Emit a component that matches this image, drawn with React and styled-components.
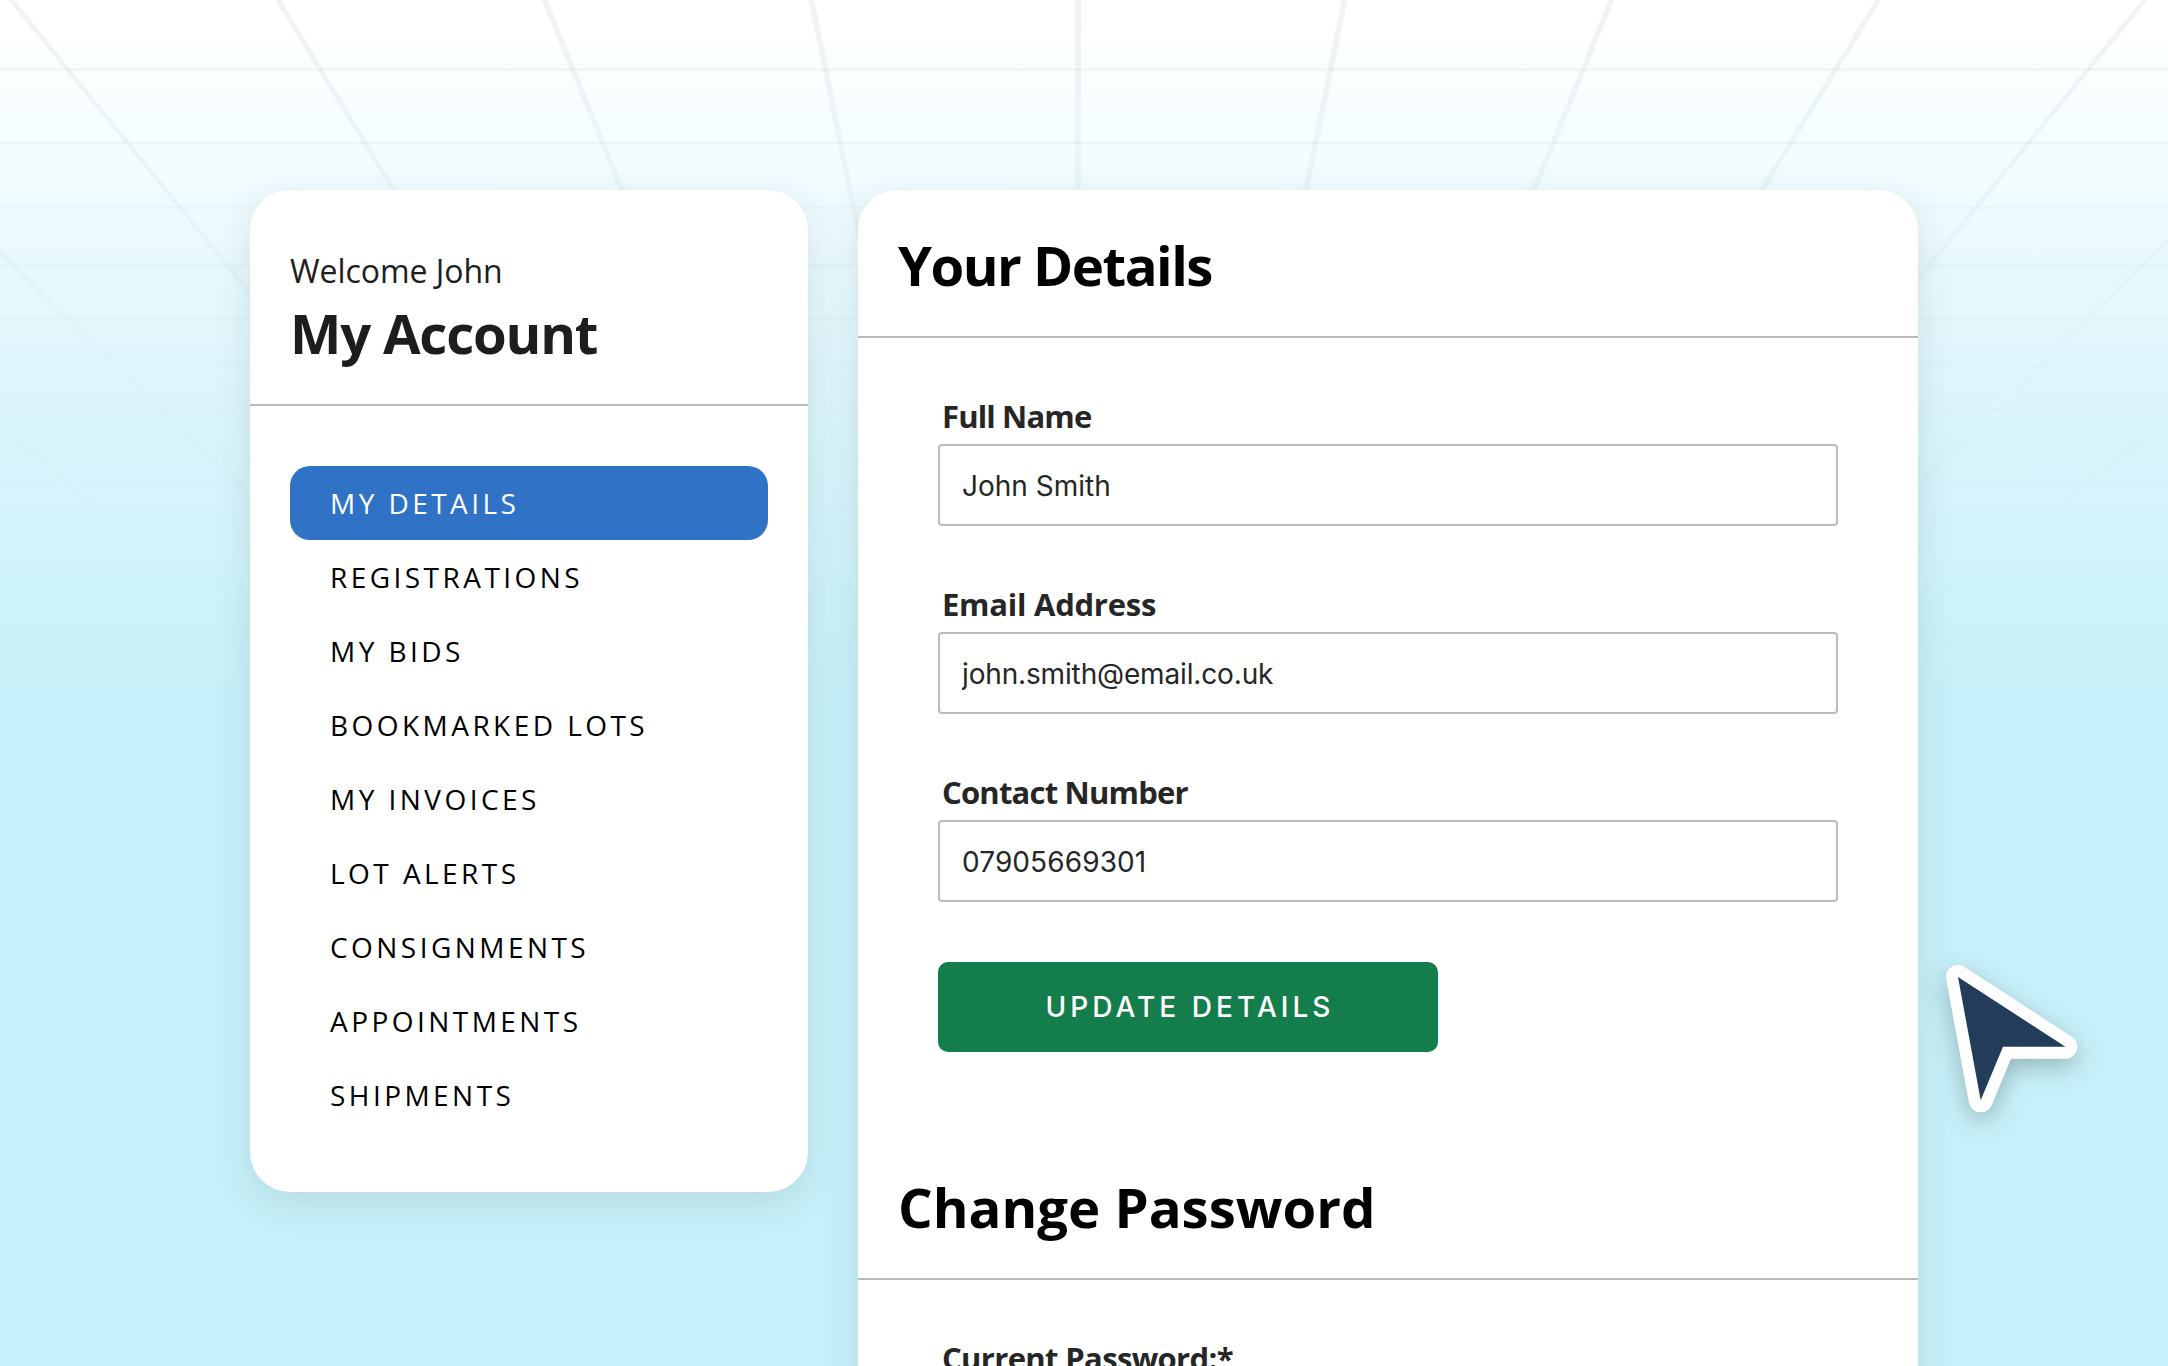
import styled, { createGlobalStyle } from 'styled-components'

const menu = [
  'My Details',
  'Registrations',
  'My Bids',
  'Bookmarked Lots',
  'My Invoices',
  'Lot Alerts',
  'Consignments',
  'Appointments',
  'Shipments',
]

const fields = [
  { id: 'name', label: 'Full Name', value: 'John Smith', labelGap: -0.85, valueGap: 0 },
  { id: 'email', label: 'Email Address', value: 'john.smith@email.co.uk', labelGap: -0.25, valueGap: -0.15 },
  { id: 'phone', label: 'Contact Number', value: '07905669301', labelGap: -0.8, valueGap: 0.1 },
]

// perspective floor: every ray runs to one vanishing point under the centre
const centre = 1078
const rays = Array.from({ length: 19 }, (_, i) => centre + (i - 9) * 266.7)
const rows = [69.5, 143, 207.8, 266, 318.3, 366, 409.4, 448, 484, 517]

function Backdrop() {
  return (
    <Lines viewBox="0 0 2168 1366" aria-hidden="true">
      <defs>
        <linearGradient id="fade" x1="0" y1="0" x2="0" y2="600" gradientUnits="userSpaceOnUse">
          <stop offset="0" stopColor="#b4bab8" stopOpacity="0.18" />
          <stop offset="0.35" stopColor="#b4c4c8" stopOpacity="0.12" />
          <stop offset="0.7" stopColor="#b4c8d0" stopOpacity="0.05" />
          <stop offset="1" stopColor="#b4c8d0" stopOpacity="0" />
        </linearGradient>
      </defs>
      {rays.map(x => (
        <polygon
          key={x}
          points={`${x - 3},0 ${x + 3},0 ${centre + (x - centre) * 0.527 + 2.4},620 ${centre + (x - centre) * 0.527 - 2.4},620`}
          fill="url(#fade)"
        />
      ))}
      {rows.map(y => (
        <rect key={y} x="0" y={y - 1.1} width="2168" height="2.2" fill="url(#fade)" />
      ))}
    </Lines>
  )
}

function Pointer() {
  return (
    <Cursor width="140" height="160" viewBox="0 0 140 160" aria-hidden="true">
      <path d="M20 20 L127.4 89.7 H65 L42.7 143.3 Z" fill="#fff" stroke="#fff" strokeWidth="24" strokeLinejoin="round" />
      <path d="M20 20 L127.4 89.7 H65 L42.7 143.3 Z" fill="#233c5c" />
    </Cursor>
  )
}

function App() {
  return (
    <Page>
      <Global />
      <Backdrop />
      <Columns>
        <SideCard>
          <CardHead $top={59}>
            <Welcome>Welcome John</Welcome>
            <Title $color="#1d1d1d" $gap={-1.2}>My Account</Title>
          </CardHead>
          <Menu>
            {menu.map((item, i) => (
              <MenuItem key={item} $active={i === 0}>{item}</MenuItem>
            ))}
          </Menu>
        </SideCard>
        <MainCard>
          <CardHead $top={40}>
            <Title $gap={-1.5}>Your Details</Title>
          </CardHead>
          <Form>
            {fields.map(f => (
              <Field key={f.id}>
                <Label htmlFor={f.id} $gap={f.labelGap}>{f.label}</Label>
                <Input id={f.id} defaultValue={f.value} $gap={f.valueGap} />
              </Field>
            ))}
            <Button type="button">Update Details</Button>
          </Form>
          <CardHead $top={40}>
            <Title $gap={0}>Change Password</Title>
          </CardHead>
          <Form>
            <Field>
              <Label htmlFor="current" $gap={-0.65}>Current Password:*</Label>
              <Input id="current" type="password" />
            </Field>
          </Form>
        </MainCard>
      </Columns>
      <Pointer />
    </Page>
  )
}

export default App

const Global = createGlobalStyle`
body{
    margin: 0;
}
*{
    box-sizing: border-box;
}
`

const Page = styled.div`
position: relative;
width: 2168px;
height: 1366px;
overflow: hidden;
background: linear-gradient(#ffffff 0, #ffffff 20px, #effcff 195px, #dff6fc 360px, #c7f1fa 690px);
font-family: "Open Sans", "Noto Sans", sans-serif;
`

const Lines = styled.svg`
position: absolute;
inset: 0;
width: 100%;
height: 100%;
`

const Columns = styled.div`
position: relative;
display: flex;
align-items: flex-start;
gap: 50px;
padding: 190px 0 0 250px;
`

const Card = styled.div`
background: #fff;
border-radius: 40px;
box-shadow: 0 10px 40px rgba(0, 0, 0, 0.1);
`

const SideCard = styled(Card)`
width: 558px;
`

const MainCard = styled(Card)`
width: 1060px;
height: 1300px;
`

const CardHead = styled.div`
display: flex;
flex-direction: column;
gap: 5px;
padding: ${p => p.$top}px 40px 36px;
border-bottom: 2px solid #bbb;
`

const Welcome = styled.p`
margin: 0;
font-size: 32px;
line-height: 44px;
color: #1d1d1d;
letter-spacing: -0.05px;
`

const Title = styled.h2`
margin: 0;
font-size: 54.5px;
font-weight: 700;
line-height: 70px;
color: ${p => p.$color || '#000'};
letter-spacing: ${p => p.$gap}px;
`

const Menu = styled.nav`
display: flex;
flex-direction: column;
padding: 60px 40px;
`

const MenuItem = styled.a`
padding: 0 40px;
border-radius: 20px;
font-size: 28px;
line-height: 74px;
letter-spacing: 3.45px;
text-transform: uppercase;
color: ${p => (p.$active ? '#fff' : '#000')};
background: ${p => (p.$active ? '#2f72c6' : 'none')};
`

const Form = styled.div`
display: flex;
flex-direction: column;
align-items: flex-start;
padding: 56px 80px 80px;
`

const Field = styled.div`
display: flex;
flex-direction: column;
gap: 6px;
width: 900px;

& + &{
    margin-top: 56px;
}
`

const Label = styled.label`
padding-left: 4px;
font-size: 31px;
font-weight: 700;
line-height: 44px;
color: #262626;
letter-spacing: ${p => p.$gap}px;
`

const Input = styled.input`
height: 82px;
padding: 1px 22px 0;
border: 2px solid #bbb;
border-radius: 4px;
background: #fff;
font-family: Inter, sans-serif;
font-size: 28px;
color: #262626;
letter-spacing: ${p => p.$gap || 0}px;
outline: none;
`

const Button = styled.button`
width: 500px;
height: 90px;
margin-top: 60px;
padding: 0 0 0 4px;
border: none;
border-radius: 10px;
background: #147d4c;
color: #fff;
font-family: Inter, sans-serif;
font-size: 28px;
font-weight: 500;
letter-spacing: 4.05px;
text-transform: uppercase;
`

const Cursor = styled.svg`
position: absolute;
left: 1938.4px;
top: 956.7px;
overflow: visible;
filter: drop-shadow(0 8px 12px rgba(0, 0, 0, 0.25));
`
